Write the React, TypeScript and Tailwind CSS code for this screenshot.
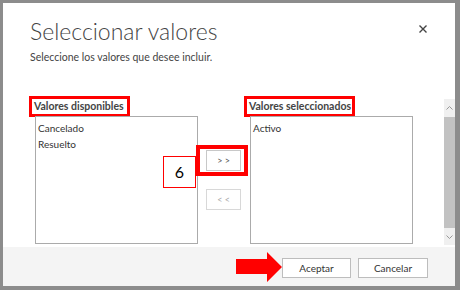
import React from 'react';

const font = { fontFamily: 'Lato, "Open Sans", "Liberation Sans", sans-serif' };

function ListBox({ items }: { items: string[] }) {
    return (
        <div className="ml-[6px] -mt-[1px] w-[163px] h-[128px] border border-[#ababab] bg-white pl-[2px] pt-[3px]">
            {items.map((it) => (
                <div key={it} className="text-[10px] leading-[16px] text-[#333]">{it}</div>
            ))}
        </div>
    );
}

export default function App() {
    return (
        <div className="w-[460px] h-[290px] bg-[#8c8c8c] pt-[3px] pl-[3px] pr-[5px] pb-[4px]" style={font}>
            <div className="h-full bg-white flex flex-col">

                {/* Cabecera */}
                <div className="relative h-[93px] pl-[27px] pt-[13px] shrink-0">
                    <h1 className="text-[23px] leading-[31px] font-light text-[#444]">Seleccionar valores</h1>
                    <p className="text-[10.5px] leading-[14px] mt-[3px] text-[#444]">Seleccione los valores que desee incluir.</p>
                    <svg className="absolute left-[416px] top-[22px]" width="8" height="8" viewBox="0 0 8 8">
                        <path d="M0.5 0.5 L7.5 7.5 M7.5 0.5 L0.5 7.5" stroke="#444" strokeWidth="1.4" />
                    </svg>
                </div>

                {/* Cuerpo */}
                <div className="flex flex-1 pl-[26px]">
                    <div className="w-[169px] flex flex-col">
                        <span className="self-start h-[21px] border-[3px] border-[#ff0000] pl-[2px] pr-[3px] text-[10.5px] leading-[15px] font-bold text-[#444]">Valores disponibles</span>
                        <ListBox items={['Cancelado', 'Resuelto']} />
                    </div>

                    <div className="w-[46px] pl-[8px] flex flex-col">
                        <div className="relative mt-[54px]">
                            <div className="absolute left-[-10px] top-[-5px] w-[52px] h-[31px] border-[4px] border-[#ff0000]" />
                            <div className="absolute left-[-43px] top-[6px] w-[33px] h-[32px] border border-[#ff0000] bg-white flex items-center justify-center text-[16px] text-black">6</div>
                            <button className="relative w-[35px] h-[21px] border border-[#c8c8c8] bg-white text-[9px] text-[#555] flex items-center justify-center">&gt; &gt;</button>
                        </div>
                        <button className="mt-[18px] w-[35px] h-[21px] border border-[#d8d8d8] bg-white text-[9px] text-[#aaa] flex items-center justify-center">&lt; &lt;</button>
                    </div>

                    <div className="w-[172px] flex flex-col">
                        <span className="self-start h-[21px] border-[3px] border-[#ff0000] pl-[2px] pr-[1px] text-[10.5px] leading-[15px] font-bold text-[#444]">Valores seleccionados</span>
                        <ListBox items={['Activo']} />
                    </div>

                    {/* Barra de desplazamiento */}
                    <div className="ml-auto mt-[3px] w-[11px] h-[146px] flex flex-col bg-[#f0f0f0]">
                        <div className="h-[18px] flex items-center justify-center">
                            <svg width="7" height="4" viewBox="0 0 7 4"><path d="M0.5 3.5 L3.5 0.5 L6.5 3.5" stroke="#999" fill="none" /></svg>
                        </div>
                        <div className="h-[111px] bg-[#c2c2c2]" />
                        <div className="flex-1 flex items-center justify-center">
                            <svg width="7" height="4" viewBox="0 0 7 4"><path d="M0.5 0.5 L3.5 3.5 L6.5 0.5" stroke="#999" fill="none" /></svg>
                        </div>
                    </div>
                </div>

                {/* Pie */}
                <div className="h-[39px] shrink-0 bg-[#f4f4f4] flex justify-end items-start pr-[27px]">
                    <svg className="mt-[5px]" width="46" height="30" viewBox="0 0 46 30">
                        <polygon points="0,7 31,7 31,0 46,15 31,30 31,22 0,22" fill="#ff0000" />
                    </svg>
                    <button className="mt-[11px] w-[69px] h-[20px] border border-[#bdbdbd] bg-white text-[10px] text-[#333]">Aceptar</button>
                    <button className="mt-[11px] ml-[7px] w-[70px] h-[20px] border border-[#bdbdbd] bg-white text-[10px] text-[#333]">Cancelar</button>
                </div>
            </div>
        </div>
    );
}
